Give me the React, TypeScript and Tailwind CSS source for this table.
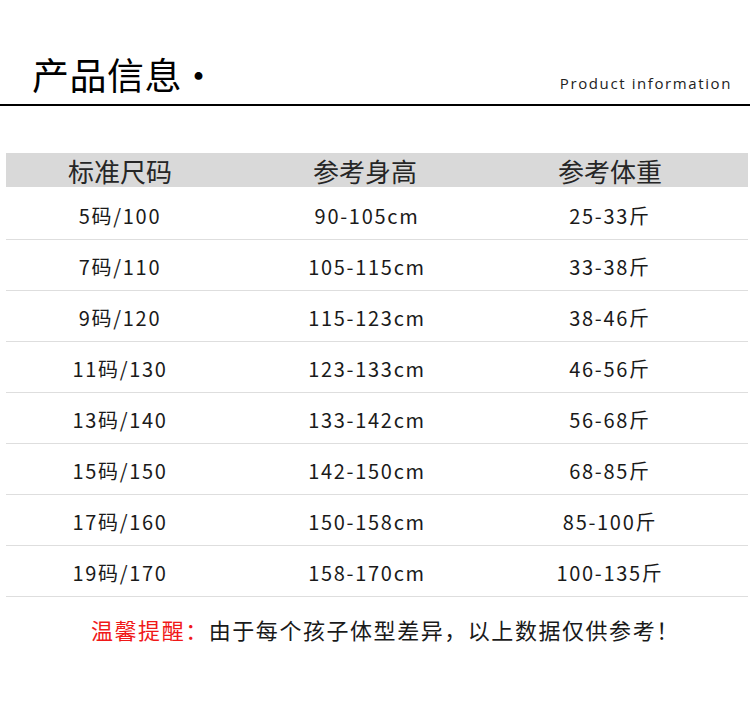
import React from "react";

const rows: [string, string, string][] = [
  ["5码/100", "90-105cm", "25-33斤"],
  ["7码/110", "105-115cm", "33-38斤"],
  ["9码/120", "115-123cm", "38-46斤"],
  ["11码/130", "123-133cm", "46-56斤"],
  ["13码/140", "133-142cm", "56-68斤"],
  ["15码/150", "142-150cm", "68-85斤"],
  ["17码/160", "150-158cm", "85-100斤"],
  ["19码/170", "158-170cm", "100-135斤"],
];

const cjk = { fontFamily: '"Noto Sans CJK SC", "Noto Sans", sans-serif' };

export default function App() {
  return (
    <div className="w-[750px] h-[713px] bg-white text-[#1a1a1a] overflow-hidden" style={cjk}>
      <div className="flex items-end justify-between pl-[32px] pr-[18px] pt-[55px] h-[104px]">
        <div className="flex items-center text-[37px] leading-[44px] mb-[8px] text-black tracking-[0.5px]">
          <span>产品信息</span>
          <span className="ml-[-2px]">•</span>
        </div>
        <div
          className="text-[15px] leading-[20px] mb-[11px] tracking-[1.6px] text-[#222]"
          style={{ fontFamily: '"Open Sans", sans-serif' }}
        >
          Product information
        </div>
      </div>
      <div className="h-[1.5px] bg-black" />
      <div className="mx-[6px] mt-[47.5px] w-[742px]">
        <div className="grid grid-cols-[228px_262px_228px] h-[34px] bg-[#d9d9d9] items-center text-[26px] leading-[34px] text-[#262626] text-center">
          <div className="pt-[1px]">标准尺码</div>
          <div className="pt-[1px]">参考身高</div>
          <div className="pt-[1px]">参考体重</div>
        </div>
        <div className="h-[2px]" />
        {rows.map((r, i) => (
          <div
            key={i}
            className="grid grid-cols-[228px_262px_228px] h-[51px] border-b border-[#dedede] items-center pt-[4px] text-[20px] leading-[28px] tracking-[1.7px] text-center text-[#1a1a1a]"
          >
            <div>{r[0]}</div>
            <div className="pl-[4px]">{r[1]}</div>
            <div>{r[2]}</div>
          </div>
        ))}
      </div>
      <div className="mt-[16px] pl-[91px] text-[22px] leading-[32px] tracking-[1.55px] text-[#1a1a1a]">
        <span className="text-[#f01818]">温馨提醒：</span>
        由于每个孩子体型差异，以上数据仅供参考！
      </div>
    </div>
  );
}
